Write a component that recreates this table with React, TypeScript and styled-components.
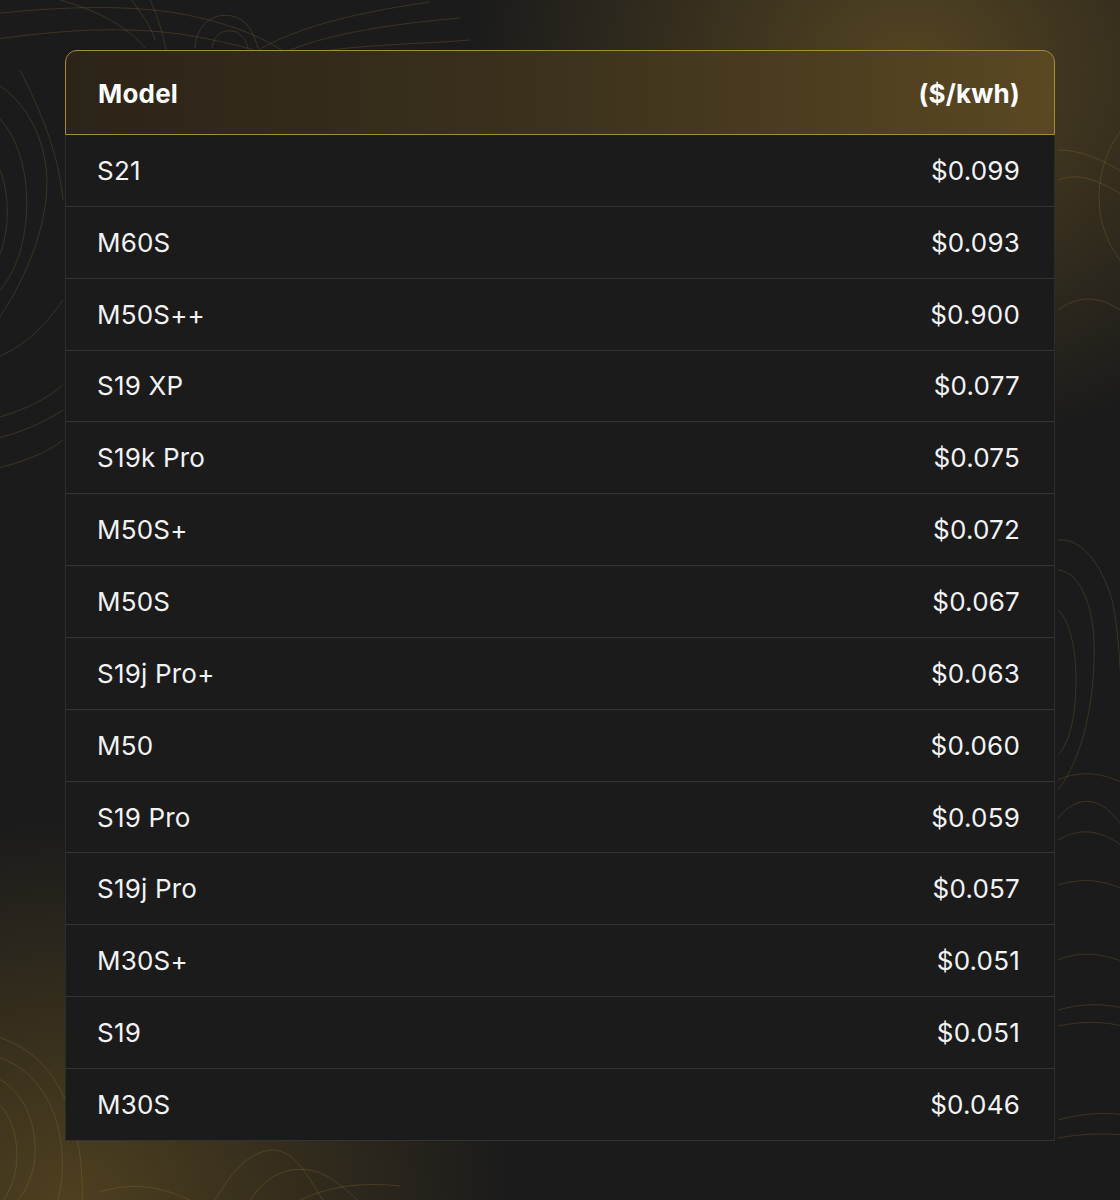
import React from "react";
import styled, { createGlobalStyle } from "styled-components";

const GlobalStyle = createGlobalStyle`
  html, body { margin: 0; padding: 0; background: #1b1b1b; }
  body { font-family: Inter, "Noto Sans", "Liberation Sans", sans-serif; }
  * { box-sizing: border-box; }
`;

const Page = styled.div`
  position: relative;
  width: 1120px;
  height: 1200px;
  overflow: hidden;
  background:
    radial-gradient(ellipse 440px 380px at 910px 70px, rgba(122, 96, 38, 0.6), rgba(122, 96, 38, 0) 100%),
    radial-gradient(ellipse 440px 380px at 70px 1200px, rgba(112, 88, 34, 0.6), rgba(112, 88, 34, 0) 100%),
    #1b1b1b;
  padding: 50px 65px 0 65px;
`;

const Contours = styled.svg`
  position: absolute;
  inset: 0;
  width: 1120px;
  height: 1200px;
  pointer-events: none;
`;

const Table = styled.div`
  position: relative;
  width: 990px;
  display: flex;
  flex-direction: column;
`;

const HeaderRow = styled.div`
  display: flex;
  justify-content: space-between;
  align-items: center;
  height: 85px;
  padding: 1px 34px 0 32px;
  border: 1px solid #a88a3c;
  border-radius: 12px 12px 0 0;
  background: linear-gradient(90deg, #2b2418 0%, #3a301c 45%, #5a4822 100%);
  color: #ffffff;
  font-weight: 700;
  font-size: 26px;
  letter-spacing: 0.2px;
`;

const Body = styled.div`
  display: flex;
  flex-direction: column;
  border-left: 1px solid #2c2c2c;
  border-right: 1px solid #2c2c2c;
  border-bottom: 1px solid #333333;
  background: #1b1b1b;
`;

const Row = styled.div<{ $last?: boolean }>`
  display: flex;
  justify-content: space-between;
  align-items: center;
  height: ${(p) => (p.$last ? "70.8px" : "71.85px")};
  padding: 0 34px 0 31px;
  border-bottom: ${(p) => (p.$last ? "none" : "1px solid #333333")};
  color: #f2f2f2;
  font-size: 26px;
  font-weight: 400;
  letter-spacing: 0.2px;
`;

const Cell = styled.span``;

const rows: [string, string][] = [
  ["S21", "$0.099"],
  ["M60S", "$0.093"],
  ["M50S++", "$0.900"],
  ["S19 XP", "$0.077"],
  ["S19k Pro", "$0.075"],
  ["M50S+", "$0.072"],
  ["M50S", "$0.067"],
  ["S19j Pro+", "$0.063"],
  ["M50", "$0.060"],
  ["S19 Pro", "$0.059"],
  ["S19j Pro", "$0.057"],
  ["M30S+", "$0.051"],
  ["S19", "$0.051"],
  ["M30S", "$0.046"],
];

const stroke = "rgba(176, 138, 62, 0.22)";

const BackgroundArt = () => (
  <Contours viewBox="0 0 1120 1200" fill="none" stroke={stroke} strokeWidth={1}>
    {/* top band */}
    <path d="M-10 14 C 50 8, 110 4, 170 12 C 220 20, 260 34, 290 56" />
    <path d="M-10 40 C 60 30, 120 26, 180 34 C 230 42, 265 52, 280 60" />
    <path d="M60 0 C 95 10, 125 24, 145 48" />
    <path d="M150 0 C 158 16, 162 32, 166 50" />
    <path d="M195 48 C 196 26, 212 12, 232 16 C 246 20, 252 28, 258 48" />
    <path d="M212 48 C 214 34, 224 28, 236 32 C 244 36, 246 42, 248 48" />
    <path d="M258 50 C 300 26, 360 12, 430 2" />
    <path d="M290 50 C 330 34, 390 24, 460 18" />
    <path d="M330 50 C 380 44, 420 44, 470 40" />
    <path d="M130 -2 C 140 12, 150 24, 155 40" />
    {/* left lobes */}
    <path d="M-10 80 C 30 100, 52 150, 46 200 C 40 250, 14 300, -10 330" />
    <path d="M-10 110 C 18 130, 30 175, 26 220 C 22 260, 8 285, -10 300" />
    <path d="M-10 150 C 4 170, 10 200, 6 230 C 3 250, -2 262, -10 270" />
    <path d="M20 70 C 40 110, 58 150, 63 200" />
    <path d="M-10 360 C 20 350, 42 330, 63 300" />
    <path d="M-10 420 C 25 410, 45 400, 63 385" />
    <path d="M-10 440 C 25 432, 48 420, 63 410" />
    <path d="M-10 470 C 25 462, 48 452, 63 440" />
    {/* right side */}
    <path d="M1058 150 C 1085 150, 1105 162, 1130 176" />
    <path d="M1058 180 C 1080 172, 1100 180, 1130 200" />
    <path d="M1130 120 C 1100 150, 1090 200, 1108 240 C 1116 256, 1124 266, 1130 272" />
    <path d="M1058 310 C 1085 290, 1110 300, 1130 318" />
    <path d="M1058 540 C 1080 538, 1100 560, 1112 600 C 1122 640, 1118 700, 1130 740" />
    <path d="M1058 570 C 1078 572, 1092 600, 1094 640 C 1096 700, 1082 760, 1058 790" />
    <path d="M1058 610 C 1070 620, 1076 650, 1076 680 C 1076 720, 1068 745, 1058 755" />
    <path d="M1058 780 C 1080 770, 1102 772, 1130 786" />
    <path d="M1058 818 C 1074 798, 1094 796, 1110 812 C 1120 822, 1126 830, 1130 836" />
    <path d="M1058 840 C 1082 826, 1104 830, 1130 852" />
    <path d="M1058 885 C 1088 876, 1108 882, 1130 892" />
    <path d="M1058 960 C 1082 950, 1104 954, 1130 964" />
    <path d="M1058 1010 C 1086 1002, 1110 1004, 1130 1010" />
    <path d="M1058 1026 C 1088 1020, 1110 1022, 1130 1028" />
    <path d="M1058 1120 C 1086 1112, 1110 1112, 1130 1116" />
    <path d="M1058 1138 C 1086 1133, 1110 1133, 1130 1136" />
    {/* bottom-left */}
    <path d="M-10 1075 C 22 1085, 40 1125, 34 1165 C 30 1185, 20 1200, 10 1210" />
    <path d="M-10 1098 C 10 1108, 20 1138, 16 1168 C 14 1182, 8 1195, 0 1205" />
    <path d="M-10 1055 C 40 1066, 66 1116, 62 1176 C 60 1192, 58 1202, 56 1210" />
    <path d="M-10 1035 C 50 1048, 86 1108, 82 1210" />
    <path d="M210 1210 C 225 1180, 245 1152, 272 1150 C 300 1150, 312 1188, 330 1210" />
    <path d="M245 1210 C 262 1174, 290 1164, 318 1172 C 338 1180, 356 1198, 366 1210" />
    <path d="M300 1200 C 330 1186, 362 1182, 400 1186" />
    <path d="M100 1192 C 130 1182, 160 1186, 190 1200" />
  </Contours>
);

export default function App() {
  return (
    <>
      <GlobalStyle />
      <Page>
        <BackgroundArt />
        <Table>
          <HeaderRow>
            <Cell>Model</Cell>
            <Cell>($/kwh)</Cell>
          </HeaderRow>
          <Body>
            {rows.map(([model, price], i) => (
              <Row key={model + i} $last={i === rows.length - 1}>
                <Cell>{model}</Cell>
                <Cell>{price}</Cell>
              </Row>
            ))}
          </Body>
        </Table>
      </Page>
    </>
  );
}
